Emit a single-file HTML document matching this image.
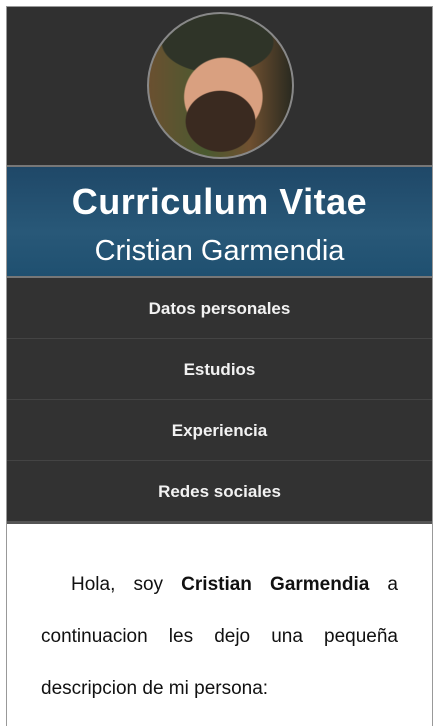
<!DOCTYPE html>
<html><head><meta charset="utf-8"><style>
*{margin:0;padding:0;box-sizing:border-box}
body{width:440px;height:712px;background:#fff;overflow:hidden;font-family:"Liberation Sans",sans-serif;position:relative}
.card{position:absolute;left:6px;top:6px;width:427px;height:720px;border:1px solid #999;border-bottom:none;background:#fff}
.top{height:158px;background:#303030;position:relative}
.av{position:absolute;left:140px;top:5px;width:147px;height:147px;border-radius:50%;border:2px solid #888;
background:radial-gradient(ellipse 40% 35% at 50% 75%,#3a2a20 60%,transparent 62%),radial-gradient(ellipse 45% 45% at 52% 58%,#d9a080 60%,transparent 62%),radial-gradient(ellipse 55% 30% at 48% 20%,#2f3428 70%,transparent 72%),linear-gradient(90deg,#6a5030,#4a5a30 40%,#705030 70%,#2a2a20)}
.ban{height:113px;border-top:2px solid #777;border-bottom:2px solid #777;background:linear-gradient(180deg,#1f4868,#285878 60%,#1f5070);color:#fff;text-align:center}
.ban h1{font-size:36px;font-weight:bold;padding-top:14px;line-height:42px;letter-spacing:.5px}
.ban h2{font-size:29px;font-weight:normal;line-height:36px;padding-top:10px}
.nav div{height:61px;background:#323232;border-bottom:1px solid #444;color:#f2f2f2;font-size:17px;font-weight:bold;text-align:center;line-height:61px}
.nav div:last-child{border-bottom:3px solid #555;height:63px}
p{padding:35px 34px 0 34px;font-size:19px;line-height:52px;text-align:justify;text-indent:30px;color:#111}
</style></head><body>
<div class="card">
<div class="top"><div class="av"></div></div>
<div class="ban"><h1>Curriculum Vitae</h1><h2>Cristian Garmendia</h2></div>
<div class="nav"><div>Datos personales</div><div>Estudios</div><div>Experiencia</div><div>Redes sociales</div></div>
<p>Hola, soy <b>Cristian Garmendia</b> a continuacion les dejo una pequeña descripcion de mi persona:</p>
</div>
</body></html>
